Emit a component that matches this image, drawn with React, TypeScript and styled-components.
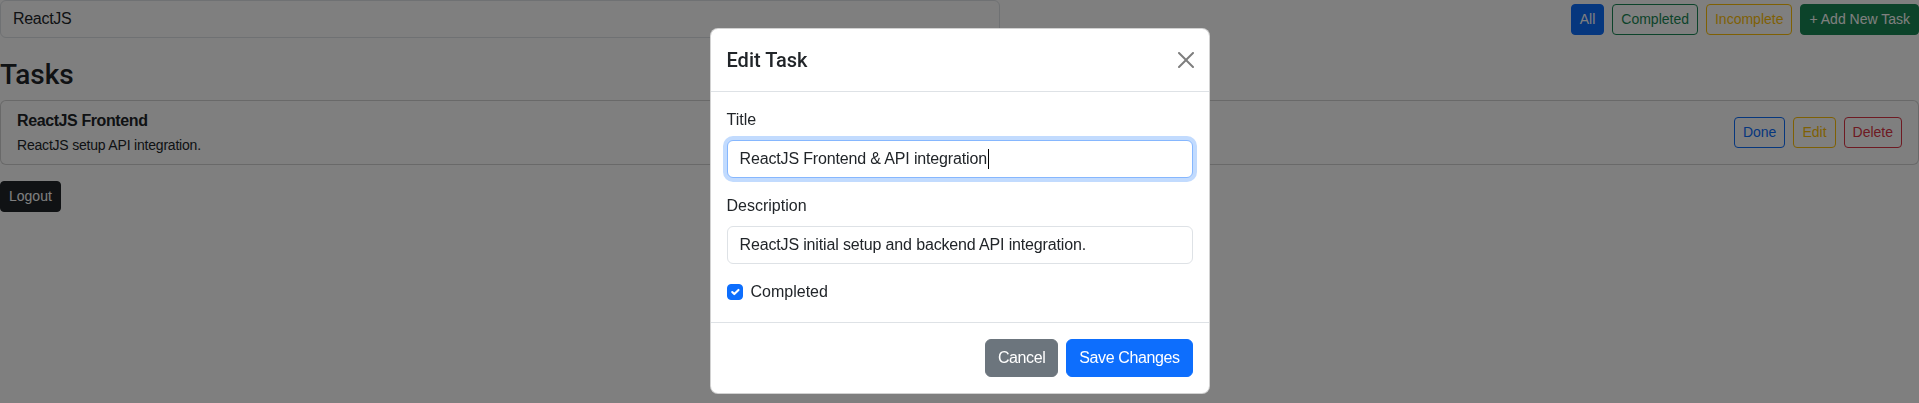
import { useLayoutEffect, useState } from "react";
import styled, { createGlobalStyle, css } from "styled-components";

const GlobalStyle = createGlobalStyle`
  *, *::before, *::after {
    box-sizing: border-box;
  }

  body {
    margin: 0;
    font-family: "Liberation Sans", Arial, sans-serif;
    font-size: 16px;
    line-height: 1.5;
    color: #212529;
    background-color: #fff;
  }
`;

const palette = {
  primary: "#0d6efd",
  success: "#198754",
  warning: "#ffc107",
  danger: "#dc3545",
  dark: "#212529",
  secondary: "#6c757d",
};

type Tone = keyof typeof palette;

const Btn = styled.button<{ $tone: Tone; $outline?: boolean; $small?: boolean }>`
  display: inline-block;
  font-family: inherit;
  font-weight: 400;
  line-height: 1.5;
  white-space: nowrap;
  cursor: pointer;
  border: 1px solid ${(p) => palette[p.$tone]};
  background-color: ${(p) => (p.$outline ? "transparent" : palette[p.$tone])};
  color: ${(p) => (p.$outline ? palette[p.$tone] : "#fff")};

  ${(p) =>
    p.$small
      ? css`
          padding: 4px 8px;
          font-size: 14px;
          border-radius: 4px;
        `
      : css`
          padding: 6px 12px;
          font-size: 16px;
          letter-spacing: -0.4px;
          border-radius: 6px;
        `}
`;

const Page = styled.div`
  width: 100%;
`;

const TopBar = styled.div`
  display: flex;
  justify-content: space-between;
  align-items: center;
  margin-bottom: 20px;
`;

const SearchInput = styled.input`
  width: 1000px;
  height: 38px;
  padding: 6px 12px;
  font-family: inherit;
  font-size: 16px;
  line-height: 1.5;
  letter-spacing: -0.3px;
  color: #212529;
  border: 1px solid #dee2e6;
  border-radius: 6px;
  outline: none;
`;

const ButtonGroup = styled.div`
  display: flex;
  align-items: center;
  gap: 8px;
`;

const Heading = styled.h3`
  margin: 0 0 8px;
  font-family: Roboto, "Liberation Sans", sans-serif;
  font-size: 28px;
  font-weight: 500;
  line-height: 1.2;
`;

const TaskCard = styled.div`
  display: flex;
  justify-content: space-between;
  align-items: center;
  padding: 8px 16px;
  margin-bottom: 16px;
  background-color: #fff;
  border: 1px solid rgba(0, 0, 0, 0.175);
  border-radius: 6px;
`;

const TaskTitle = styled.div`
  font-weight: 700;
  letter-spacing: -0.4px;
  margin-bottom: 2px;
`;

const TaskDesc = styled.div`
  font-size: 14px;
  letter-spacing: -0.2px;
`;

const Backdrop = styled.div`
  position: fixed;
  inset: 0;
  z-index: 1050;
  background-color: rgba(0, 0, 0, 0.5);
`;

const ModalLayer = styled.div`
  position: fixed;
  inset: 0;
  z-index: 1055;
  overflow: hidden;
`;

const Dialog = styled.div`
  width: 500px;
  margin: 28px auto;
`;

const ModalContent = styled.div`
  display: flex;
  flex-direction: column;
  background-color: #fff;
  border: 1px solid rgba(0, 0, 0, 0.175);
  border-radius: 8px;
`;

const ModalHeader = styled.div`
  display: flex;
  align-items: center;
  padding: 16px;
  border-bottom: 1px solid #dee2e6;
`;

const ModalTitle = styled.h5`
  margin: 0;
  font-family: Roboto, "Liberation Sans", sans-serif;
  font-size: 20px;
  font-weight: 500;
  line-height: 30px;
`;

const CloseButton = styled.button`
  display: flex;
  align-items: center;
  justify-content: center;
  width: 24px;
  height: 24px;
  padding: 4px;
  margin: -8px -5px -8px auto;
  border: 0;
  background: transparent;
  opacity: 0.5;
  cursor: pointer;
`;

const ModalBody = styled.div`
  padding: 16px;
`;

const FormGroup = styled.div`
  margin-bottom: 16px;
`;

const Label = styled.label`
  display: inline-block;
  margin-bottom: 8px;
`;

const FieldWrap = styled.div`
  position: relative;
`;

const TextField = styled.input<{ $focused?: boolean }>`
  display: block;
  width: 100%;
  padding: 6px 12px;
  font-family: inherit;
  font-size: 16px;
  line-height: 1.5;
  letter-spacing: -0.15px;
  color: #212529;
  caret-color: transparent;
  background-color: #fff;
  border: 1px solid #dee2e6;
  border-radius: 6px;
  outline: none;

  ${(p) =>
    p.$focused &&
    css`
      border-color: #86b7fe;
      box-shadow: 0 0 0 4px rgba(13, 110, 253, 0.25);
    `}
`;

const Caret = styled.span`
  position: absolute;
  top: 9px;
  width: 1px;
  height: 20px;
  background-color: #000;
  pointer-events: none;
`;

const CheckRow = styled.div`
  display: flex;
  align-items: center;
  gap: 8px;
  min-height: 24px;
  margin-bottom: 2px;
`;

const CheckBox = styled.span`
  display: flex;
  align-items: center;
  justify-content: center;
  width: 16px;
  height: 16px;
  background-color: #0d6efd;
  border: 1px solid #0d6efd;
  border-radius: 4px;
`;

const ModalFooter = styled.div`
  display: flex;
  justify-content: flex-end;
  align-items: center;
  gap: 8px;
  padding: 16px;
  border-top: 1px solid #dee2e6;
`;

function App() {
  const title = "ReactJS Frontend & API integration";
  const [caretLeft, setCaretLeft] = useState(0);

  // place the fake caret right after the title text
  useLayoutEffect(() => {
    const ctx = document.createElement("canvas").getContext("2d");
    if (!ctx) return;
    ctx.font = '16px "Liberation Sans", Arial, sans-serif';
    const width = ctx.measureText(title).width - 0.15 * title.length;
    setCaretLeft(13 + Math.round(width));
  }, []);

  return (
    <>
      <GlobalStyle />
      <Page>
        <TopBar>
          <SearchInput defaultValue="ReactJS" />
          <ButtonGroup>
            <Btn $tone="primary" $small>All</Btn>
            <Btn $tone="success" $outline $small>Completed</Btn>
            <Btn $tone="warning" $outline $small>Incomplete</Btn>
            <Btn $tone="success" $small>+ Add New Task</Btn>
          </ButtonGroup>
        </TopBar>

        <Heading>Tasks</Heading>

        <TaskCard>
          <div>
            <TaskTitle>ReactJS Frontend</TaskTitle>
            <TaskDesc>ReactJS setup API integration.</TaskDesc>
          </div>
          <ButtonGroup>
            <Btn $tone="primary" $outline $small>Done</Btn>
            <Btn $tone="warning" $outline $small>Edit</Btn>
            <Btn $tone="danger" $outline $small>Delete</Btn>
          </ButtonGroup>
        </TaskCard>

        <Btn $tone="dark" $small>Logout</Btn>
      </Page>

      <Backdrop />
      <ModalLayer>
        <Dialog>
          <ModalContent>
            <ModalHeader>
              <ModalTitle>Edit Task</ModalTitle>
              <CloseButton aria-label="Close">
                <svg width="16" height="16" viewBox="0 0 16 16">
                  <path
                    fill="#000"
                    d="M.293.293a1 1 0 0 1 1.414 0L8 6.586 14.293.293a1 1 0 1 1 1.414 1.414L9.414 8l6.293 6.293a1 1 0 0 1-1.414 1.414L8 9.414l-6.293 6.293a1 1 0 0 1-1.414-1.414L6.586 8 .293 1.707a1 1 0 0 1 0-1.414z"
                  />
                </svg>
              </CloseButton>
            </ModalHeader>

            <ModalBody>
              <FormGroup>
                <Label>Title</Label>
                <FieldWrap>
                  <TextField defaultValue={title} $focused />
                  {caretLeft > 0 ? <Caret style={{ left: caretLeft }} /> : null}
                </FieldWrap>
              </FormGroup>
              <FormGroup>
                <Label>Description</Label>
                <TextField defaultValue="ReactJS initial setup and backend API integration." />
              </FormGroup>
              <CheckRow>
                <CheckBox>
                  <svg width="14" height="14" viewBox="0 0 20 20">
                    <path
                      d="m6 10 3 3 6-6"
                      fill="none"
                      stroke="#fff"
                      strokeWidth="3"
                      strokeLinecap="round"
                      strokeLinejoin="round"
                    />
                  </svg>
                </CheckBox>
                <span>Completed</span>
              </CheckRow>
            </ModalBody>

            <ModalFooter>
              <Btn $tone="secondary">Cancel</Btn>
              <Btn $tone="primary">Save Changes</Btn>
            </ModalFooter>
          </ModalContent>
        </Dialog>
      </ModalLayer>
    </>
  );
}

export default App;
